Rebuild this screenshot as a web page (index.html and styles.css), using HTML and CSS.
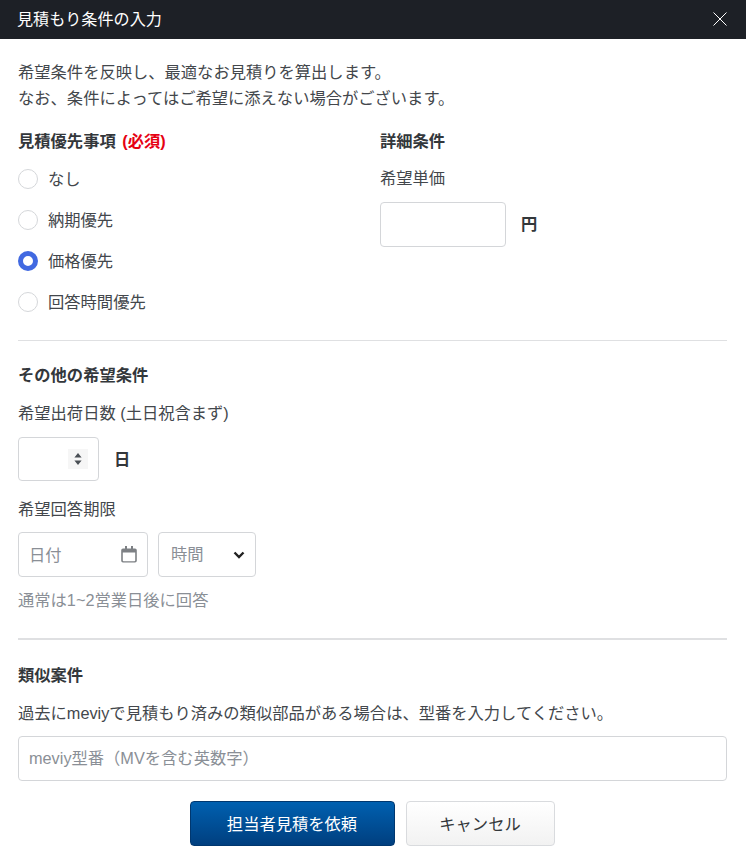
FILE: index.html
```html
<!DOCTYPE html>
<html lang="ja">
<head>
    <meta charset="UTF-8">
    <meta name="viewport" content="width=device-width, initial-scale=1.0">
    <title>見積もり条件の入力</title>
    <link rel="stylesheet" href="styles.css">
</head>
<body>
    <div class="modal">
        <div class="modal-header">
            <h1>見積もり条件の入力</h1>
            <svg class="close-icon" width="14" height="14" viewBox="0 0 14 14" aria-label="閉じる">
                <path d="M.5.5l13 13M13.5.5l-13 13" stroke="#fff" stroke-width="1" fill="none"/>
            </svg>
        </div>

        <form class="modal-body">
            <p class="intro">希望条件を反映し、最適なお見積りを算出します。<br>なお、条件によってはご希望に添えない場合がございます。</p>

            <div class="columns">
                <div class="col-left">
                    <h2 class="section-title">見積優先事項 <span class="required">(必須)</span></h2>
                    <div class="radio-list">
                        <label class="radio-row"><input type="radio" name="priority"><span>なし</span></label>
                        <label class="radio-row"><input type="radio" name="priority"><span>納期優先</span></label>
                        <label class="radio-row"><input type="radio" name="priority" checked><span>価格優先</span></label>
                        <label class="radio-row"><input type="radio" name="priority"><span>回答時間優先</span></label>
                    </div>
                </div>
                <div class="col-right">
                    <h2 class="section-title">詳細条件</h2>
                    <label class="field-label">希望単価</label>
                    <div class="unit-row">
                        <input type="text" class="control price-input">
                        <span class="unit">円</span>
                    </div>
                </div>
            </div>

            <hr class="divider first">

            <h2 class="section-title">その他の希望条件</h2>
            <label class="field-label days-label">希望出荷日数 (土日祝含まず)</label>
            <div class="unit-row days-row">
                <div class="control days-input">
                    <span class="spinner">
                        <svg width="8" height="12" viewBox="0 0 8 12"><path d="M4 0l3.600 4.600H.4zM4 12L.4 7.400h7.200z" fill="#4a4f55"/></svg>
                    </span>
                </div>
                <span class="unit">日</span>
            </div>

            <label class="field-label deadline-label">希望回答期限</label>
            <div class="deadline-row">
                <div class="control date-input">
                    <span class="date-text">日付</span>
                    <svg width="16" height="17" viewBox="0 0 16 17">
                        <path d="M4 0h2v3H4zM10 0h2v3h-2z" fill="#7d8084"/>
                        <path d="M2 2.500h12a1.800 1.800 0 0 1 1.800 1.800v10.400a1.800 1.800 0 0 1-1.800 1.800H2a1.800 1.800 0 0 1-1.800-1.800V4.300A1.800 1.800 0 0 1 2 2.500zM1.800 6.500v8c0 .5.300.8.800.8h10.800c.5 0 .8-.3.8-.8v-8z" fill="#7d8084" fill-rule="evenodd"/>
                    </svg>
                </div>
                <select class="control time-select">
                    <option>時間</option>
                </select>
            </div>
            <p class="note">通常は1~2営業日後に回答</p>

            <hr class="divider second">

            <h2 class="section-title">類似案件</h2>
            <p class="similar-text">過去にmeviyで見積もり済みの類似部品がある場合は、型番を入力してください。</p>
            <input type="text" class="control model-input" placeholder="meviy型番（MVを含む英数字）">

            <div class="actions">
                <button type="button" class="button primary">担当者見積を依頼</button>
                <button type="button" class="button cancel">キャンセル</button>
            </div>
        </form>
    </div>
</body>
</html>
```

FILE: styles.css
```css
* {
    box-sizing: border-box;
    margin: 0;
    padding: 0;
}

body {
    font-family: "Liberation Sans", "Noto Sans CJK JP", sans-serif;
    font-size: 16.3px;
    color: #43474c;
    background-color: #fff;
}

.modal {
    width: 746px;
    height: 856px;
    overflow: hidden;
}

.modal-header {
    height: 39px;
    padding: 0 19px 2px 17px;
    display: flex;
    justify-content: space-between;
    align-items: center;
    background-color: #1d2026;
}

.modal-header h1 {
    padding-bottom: 1px;
    font-size: 16.1px;
    font-weight: 400;
    color: #fff;
}

.modal-body {
    padding: 20px 19px 0 18px;
}

.intro {
    line-height: 26px;
    margin-bottom: 17px;
}

.section-title {
    font-size: 16.3px;
    font-weight: 700;
    line-height: 26px;
    color: #33373b;
}

.required {
    margin-left: 2px;
    color: #e60012;
}

.columns {
    display: flex;
}

.col-left {
    width: 362px;
}

.col-right {
    flex: 1;
}

.radio-list {
    margin-top: 4px;
}

.radio-row {
    display: flex;
    align-items: center;
    gap: 10px;
    height: 41px;
}

.radio-row span {
    padding-bottom: 2px;
}

.radio-row input {
    appearance: none;
    width: 20px;
    height: 20px;
    border: 1px solid #d5d7da;
    border-radius: 50%;
    background-color: #fff;
}

.radio-row input:checked {
    border: 5px solid #4169e1;
}

.field-label {
    display: block;
    line-height: 26px;
}

.col-right .field-label {
    margin-top: 11px;
    padding-bottom: 1px;
}

.control {
    border: 1px solid #d4d6d9;
    border-radius: 4px;
    background-color: #fff;
    font-family: inherit;
    font-size: 16.3px;
    color: #8a8f96;
}

.unit-row {
    display: flex;
    align-items: center;
}

.col-right .unit-row {
    margin-top: 10px;
}

.price-input {
    width: 126px;
    height: 45px;
}

.unit {
    margin-left: 15px;
    padding-bottom: 3px;
    font-weight: 700;
    color: #33373b;
}

.divider {
    border: none;
    background-color: #dfe0e2;
}

.divider.first {
    height: 1px;
    margin-top: 18px;
    margin-bottom: 21px;
}

.days-label {
    margin-top: 12px;
}

.days-row {
    margin-top: 11px;
}

.days-input {
    width: 81px;
    height: 44px;
    padding-right: 10px;
    display: flex;
    justify-content: flex-end;
    align-items: center;
}

.spinner {
    width: 20px;
    height: 20px;
    display: flex;
    justify-content: center;
    align-items: center;
    background-color: #f6f6f6;
}

.deadline-label {
    margin-top: 15px;
}

.deadline-row {
    margin-top: 10px;
    display: flex;
    gap: 10px;
}

.date-input {
    width: 130px;
    height: 45px;
    padding: 0 10px 0 10px;
    display: flex;
    justify-content: space-between;
    align-items: center;
}

.date-text {
    padding-bottom: 2px;
}

.time-select {
    width: 98px;
    height: 45px;
    padding: 0 0 2px 12px;
    appearance: none;
    background: #fff url("data:image/svg+xml,%3Csvg xmlns='http://www.w3.org/2000/svg' width='12' height='8' viewBox='0 0 12 8'%3E%3Cpath d='M1.500 1.500L6 6l4.500-4.500' fill='none' stroke='%23222' stroke-width='2.400'/%3E%3C/svg%3E") no-repeat right 10px center;
}

.note {
    margin-top: 10px;
    line-height: 26px;
    color: #8a8f96;
}

.divider.second {
    height: 2px;
    margin-top: 25px;
    margin-bottom: 22px;
}

.similar-text {
    margin-top: 12px;
    line-height: 26px;
}

.model-input {
    display: block;
    width: 709px;
    height: 45px;
    margin-top: 10px;
    padding: 0 10px 1px;
}

.model-input::placeholder {
    color: #8a8f96;
    opacity: 1;
}

.actions {
    margin-top: 20px;
    display: flex;
    justify-content: center;
    gap: 11px;
    padding-right: 1px;
}

.button {
    height: 45px;
    padding-bottom: 1px;
    border-radius: 4px;
    font-family: inherit;
    font-size: 16.3px;
}

.button.primary {
    width: 205px;
    border: 1px solid #00376f;
    color: #fff;
    background: linear-gradient(#0060b0, #003f7f);
}

.button.cancel {
    width: 149px;
    border: 1px solid #d9dbde;
    color: #33373b;
    background: linear-gradient(#fff, #f2f2f2);
}
```
